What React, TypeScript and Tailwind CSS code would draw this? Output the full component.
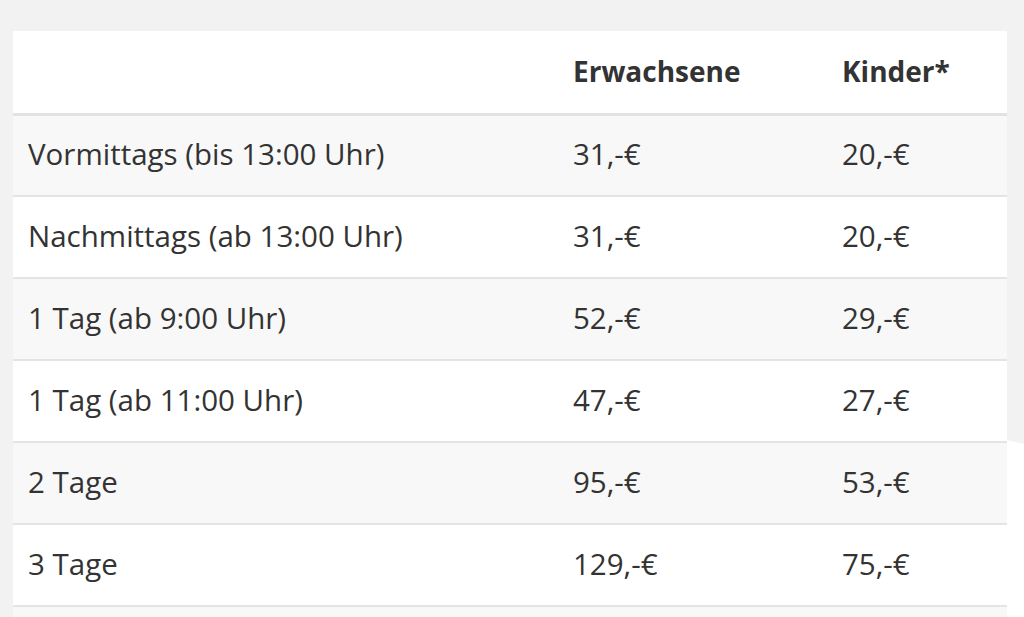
import React from 'react';

const preise = [
  { label: 'Vormittags (bis 13:00 Uhr)', erw: '31,-€', kind: '20,-€' },
  { label: 'Nachmittags (ab 13:00 Uhr)', erw: '31,-€', kind: '20,-€' },
  { label: '1 Tag (ab 9:00 Uhr)', erw: '52,-€', kind: '29,-€' },
  { label: '1 Tag (ab 11:00 Uhr)', erw: '47,-€', kind: '27,-€' },
  { label: '2 Tage', erw: '95,-€', kind: '53,-€' },
  { label: '3 Tage', erw: '129,-€', kind: '75,-€' },
];

export default function App() {
  return (
    <div
      className="flex h-[617px] w-[1024px] overflow-hidden bg-[#f2f2f2] text-[#333]"
      style={{ fontFamily: '"Open Sans", "Noto Sans", sans-serif' }}
    >
      <div className="w-[13px] shrink-0" />

      <div className="w-[994px] shrink-0 pt-[31px]">
        <table className="w-full border-collapse text-[29.5px] leading-none">
          <thead>
            <tr className="h-[83px] border-b-[3px] border-[#e2e2e2] bg-white text-[28px]">
              <th className="w-[545px] px-[15px] pb-[2px] text-left font-bold"></th>
              <th className="w-[269px] px-[15px] pb-[2px] text-left font-bold">Erwachsene</th>
              <th className="px-[15px] pb-[2px] text-left font-bold">Kinder*</th>
            </tr>
          </thead>
          <tbody>
            {preise.map((p, i) => (
              <tr
                key={p.label}
                className={`h-[82px] border-b-2 border-[#e4e4e4] ${i % 2 === 0 ? 'bg-[#f8f8f8]' : 'bg-white'}`}
              >
                <td className="px-[15px] pb-[3px] whitespace-nowrap">{p.label}</td>
                <td className="px-[15px] pb-[3px]">{p.erw}</td>
                <td className="px-[15px] pb-[3px]">{p.kind}</td>
              </tr>
            ))}
            <tr className="h-[82px] bg-[#f8f8f8]">
              <td colSpan={3}></td>
            </tr>
          </tbody>
        </table>
      </div>

      {/* rechter Rand: oben grau, unten weiß */}
      <div className="flex flex-1 flex-col">
        <div className="h-[440px] bg-[#f2f2f2]" />
        <svg width="17" height="4" viewBox="0 0 17 4" className="block">
          <rect width="17" height="4" fill="#ffffff" />
          <polygon points="0,0 17,0 17,4" fill="#f2f2f2" />
        </svg>
        <div className="flex-1 bg-white" />
      </div>
    </div>
  );
}
